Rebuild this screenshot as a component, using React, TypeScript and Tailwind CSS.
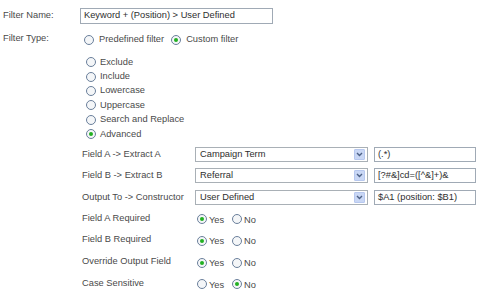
import React from 'react'

function Radio({ checked = false }: { checked?: boolean }) {
  return (
    <span className="inline-flex w-[10px] h-[10px] shrink-0 items-center justify-center rounded-full border border-[#6a7f9b] bg-[#f4f6f8]">
      {checked && <span className="w-[4px] h-[4px] rounded-full bg-[#22b022]" />}
    </span>
  )
}

function Select({ value }: { value: string }) {
  return (
    <div className="flex items-center w-[173px] h-[15px] border border-[#a9b0b6] bg-white pl-[4px] pr-[2px]">
      <span className="flex-1 text-[#2e2e2e]">{value}</span>
      <span className="flex items-center justify-center w-[11px] h-[11px] bg-[#c9d7f5] border border-[#b7c8ef] rounded-[1px]">
        <svg width="7" height="5" viewBox="0 0 7 5">
          <path d="M1 1 L3.5 3.5 L6 1" fill="none" stroke="#4d6185" strokeWidth="1.4" />
        </svg>
      </span>
    </div>
  )
}

function TextBox({ value, width }: { value: string; width: string }) {
  return (
    <div className={`flex items-center ${width} border border-[#a0aab5] bg-white pl-[3px] text-[#2e2e2e]`}>
      {value}
    </div>
  )
}

function YesNo({ yes }: { yes: boolean }) {
  return (
    <div className="flex items-center pl-[2px]">
      <Radio checked={yes} />
      <span className="ml-[2px] mt-[2px] w-[23px]">Yes</span>
      <Radio checked={!yes} />
      <span className="ml-[2px] mt-[2px]">No</span>
    </div>
  )
}

export default function App() {
  const options = [
    { label: 'Exclude', checked: false },
    { label: 'Include', checked: false },
    { label: 'Lowercase', checked: false },
    { label: 'Uppercase', checked: false },
    { label: 'Search and Replace', checked: false },
    { label: 'Advanced', checked: true },
  ]

  const fields = [
    { label: 'Field A -> Extract A', select: 'Campaign Term', text: '(.*)' },
    { label: 'Field B -> Extract B', select: 'Referral', text: '[?#&]cd=([^&]+)&' },
    { label: 'Output To -> Constructor', select: 'User Defined', text: '$A1 (position: $B1)' },
  ]

  const toggles = [
    { label: 'Field A Required', yes: true },
    { label: 'Field B Required', yes: true },
    { label: 'Override Output Field', yes: true },
    { label: 'Case Sensitive', yes: false },
  ]

  return (
    <div className="w-[480px] h-[299px] overflow-hidden bg-white text-[9.3px] leading-none text-[#4a4a4a] font-['Liberation_Sans',Arial,sans-serif]">
      {/* Filter name */}
      <div className="flex items-center pt-[8px]">
        <span className="w-[80px] pl-[3px]">Filter Name:</span>
        <TextBox value="Keyword + (Position) > User Defined" width="w-[193px] h-[16px]" />
      </div>

      {/* Filter type */}
      <div className="flex items-center h-[14px] mt-[9px]">
        <span className="w-[84px] pl-[3px] -mt-[3px]">Filter Type:</span>
        <Radio />
        <span className="ml-[5px]">Predefined filter</span>
        <span className="ml-[7px]" />
        <Radio checked />
        <span className="ml-[5px]">Custom filter</span>
      </div>

      {/* Custom filter options */}
      <div className="flex flex-col pl-[86px] mt-[8px]">
        {options.map(({ label, checked }) => (
          <div key={label} className="flex items-center h-[14.4px]">
            <Radio checked={checked} />
            <span className="ml-[4px]">{label}</span>
          </div>
        ))}
      </div>

      {/* Advanced fields */}
      <div className="flex flex-col pl-[82px] mt-[2px]">
        {fields.map(({ label, select, text }) => (
          <div key={label} className="flex items-center h-[21.7px]">
            <span className="w-[113px]">{label}</span>
            <Select value={select} />
            <span className="ml-[6px]" />
            <TextBox value={text} width="w-[102px] h-[15px]" />
          </div>
        ))}
        {toggles.map(({ label, yes }) => (
          <div key={label} className="flex items-center h-[21.7px]">
            <span className="w-[113px] -mt-[2px]">{label}</span>
            <YesNo yes={yes} />
          </div>
        ))}
      </div>
    </div>
  )
}
